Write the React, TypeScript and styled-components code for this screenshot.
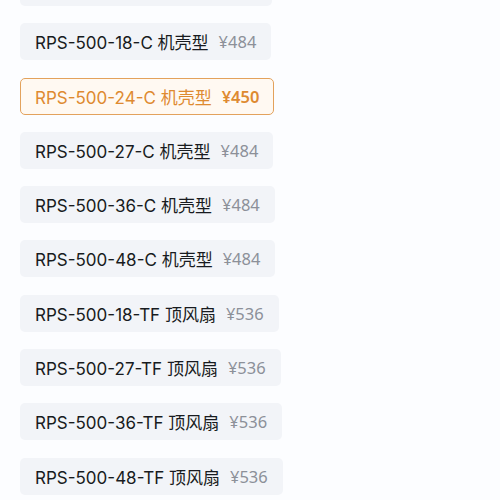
import React from "react";
import styled, { createGlobalStyle } from "styled-components";

const Global = createGlobalStyle`
  html, body { margin: 0; padding: 0; background: #fcfdff; }
  body { font-family: "Inter", "Noto Sans CJK SC", sans-serif; overflow: hidden; }
`;

const List = styled.div`
  display: flex;
  flex-direction: column;
  align-items: flex-start;
  gap: 17.3px;
  padding-left: 20px;
  margin-top: -31px;
`;

const Chip = styled.div<{ $active?: boolean; $blank?: boolean }>`
  box-sizing: border-box;
  display: inline-flex;
  align-items: center;
  gap: 10px;
  height: 37px;
  width: ${(p) => (p.$blank ? "252px" : "auto")};
  padding: 0 14px;
  border-radius: 5px;
  background: ${(p) => (p.$active ? "#fff9f2" : "#f2f4f8")};
  border: 1.5px solid ${(p) => (p.$active ? "#e3a25c" : "transparent")};
  font-size: 17px;
  white-space: nowrap;
`;

const Name = styled.span<{ $active?: boolean }>`
  color: ${(p) => (p.$active ? "#de8a30" : "#181b20")};
`;

const Price = styled.span<{ $active?: boolean }>`
  font-family: "Noto Sans", "Noto Sans CJK SC", sans-serif;
  font-size: 16.5px;
  color: ${(p) => (p.$active ? "#de8a30" : "#8c9099")};
  font-weight: ${(p) => (p.$active ? 600 : 400)};
`;

const items = [
  { name: "RPS-500-18-C 机壳型", price: "¥484" },
  { name: "RPS-500-24-C 机壳型", price: "¥450", active: true },
  { name: "RPS-500-27-C 机壳型", price: "¥484" },
  { name: "RPS-500-36-C 机壳型", price: "¥484" },
  { name: "RPS-500-48-C 机壳型", price: "¥484" },
  { name: "RPS-500-18-TF 顶风扇", price: "¥536" },
  { name: "RPS-500-27-TF 顶风扇", price: "¥536" },
  { name: "RPS-500-36-TF 顶风扇", price: "¥536" },
  { name: "RPS-500-48-TF 顶风扇", price: "¥536" },
];

export default function App() {
  return (
    <>
      <Global />
      <List>
        <Chip $blank aria-hidden />
        {items.map((it) => (
          <Chip key={it.name} $active={it.active}>
            <Name $active={it.active}>{it.name}</Name>
            <Price $active={it.active}>{it.price}</Price>
          </Chip>
        ))}
      </List>
    </>
  );
}
